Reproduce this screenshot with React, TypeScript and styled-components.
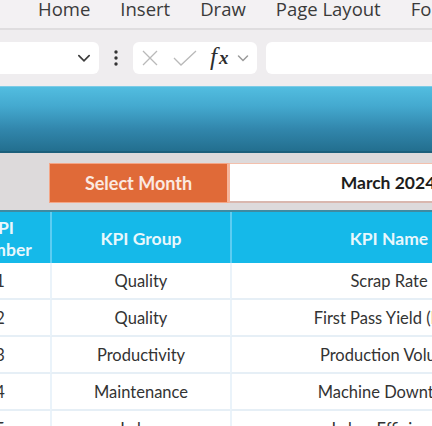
import React from "react";
import styled, { createGlobalStyle } from "styled-components";

const Global = createGlobalStyle`
  html, body { margin: 0; padding: 0; background: #ffffff; }
  body { width: 432px; height: 426px; overflow: hidden; }
  * { box-sizing: border-box; }
`;

const Page = styled.div`
  width: 432px;
  height: 426px;
  overflow: hidden;
  background: #ffffff;
`;

const TabBar = styled.div`
  height: 30px;
  background: #f3f1f3;
  display: flex;
  align-items: flex-start;
  gap: 30px;
  padding-left: 38px;
  border-bottom: 2px solid #dfdddf;
  white-space: nowrap;
  overflow: hidden;
`;

const Tab = styled.span`
  font-family: "Open Sans", "Noto Sans", sans-serif;
  font-size: 18.5px;
  line-height: 20px;
  color: #3a3a3a;
  margin-top: -1px;
`;

const FormulaRow = styled.div`
  height: 56px;
  background: #efedef;
  display: flex;
  align-items: center;
`;

const NameBox = styled.div`
  width: 107px;
  height: 32px;
  margin-left: -8px;
  background: #ffffff;
  border-radius: 6px;
  display: flex;
  align-items: center;
  justify-content: flex-end;
  padding-right: 7px;
`;

const Dots = styled.div`
  width: 34px;
  display: flex;
  justify-content: center;
`;

const IconBox = styled.div`
  width: 124px;
  height: 32px;
  background: #ffffff;
  border-radius: 6px;
  display: flex;
  align-items: center;
  padding-left: 7px;
`;

const Spacer = styled.span<{ $w: number }>`
  width: ${(p) => p.$w}px;
  flex: none;
`;

const FormulaInput = styled.div`
  flex: 1;
  height: 32px;
  margin-left: 9px;
  margin-right: -10px;
  background: #ffffff;
  border-radius: 6px;
`;

const Banner = styled.div`
  height: 67px;
  background: linear-gradient(180deg, #52bde0 0%, #44a9cf 30%, #3287ad 65%, #236f8f 100%);
  border-top: 1px solid #7ccbe6;
  border-bottom: 2px solid #1c5f7b;
`;

const Band = styled.div`
  height: 59px;
  background: #dddadb;
  display: grid;
  grid-template-columns: 99px 181px 316px;
  margin-left: -50px;
  align-items: start;
  padding-top: 10px;
  border-bottom: 2px solid #3f8aa1;
`;

const SelectLabel = styled.div`
  height: 40px;
  background: #e06a38;
  border: 1px solid #f4a687;
  border-right: 3px solid #f6b59b;
  display: flex;
  align-items: center;
  justify-content: center;
  font-family: "Lato", sans-serif;
  font-weight: 700;
  font-size: 18px;
  color: #fbe9e1;
`;

const SelectValue = styled.div`
  height: 40px;
  background: #ffffff;
  border-top: 1px solid #f3c0ad;
  border-bottom: 2px solid #d9b7ae;
  display: flex;
  align-items: center;
  justify-content: center;
  font-family: "Lato", sans-serif;
  font-weight: 700;
  font-size: 17.5px;
  color: #1d1d1d;
`;

const Table = styled.div`
  display: grid;
  grid-template-columns: 100px 180px 316px;
  margin-left: -50px;
`;

const HeadCell = styled.div<{ $first?: boolean }>`
  height: 51px;
  background: #15b9e9;
  border-left: ${(p) => (p.$first ? "none" : "2px solid #5ccdf2")};
  display: flex;
  align-items: center;
  justify-content: center;
  text-align: center;
  font-family: "Lato", sans-serif;
  font-weight: 700;
  font-size: 17.5px;
  line-height: 22px;
  color: #e9f7fc;
  padding-top: 3px;
`;

const Cell = styled.div<{ $first?: boolean }>`
  height: 37px;
  background: #ffffff;
  border-left: ${(p) => (p.$first ? "none" : "2px solid #eaf3fa")};
  border-bottom: 2px solid #e6eff6;
  display: flex;
  align-items: center;
  justify-content: center;
  font-family: "Lato", sans-serif;
  font-size: 16.5px;
  color: #333333;
  white-space: nowrap;
  overflow: hidden;
`;

const ChevronIcon = ({ size = 14, color = "#444" }: { size?: number; color?: string }) => (
  <svg width={size} height={size} viewBox="0 0 14 14">
    <path d="M2.5 5 L7 9.5 L11.5 5" fill="none" stroke={color} strokeWidth="1.5" strokeLinecap="round" />
  </svg>
);

const rows = [
  ["1", "Quality", "Scrap Rate"],
  ["2", "Quality", "First Pass Yield (FPY)"],
  ["3", "Productivity", "Production Volume"],
  ["4", "Maintenance", "Machine Downtime"],
  ["5", "Labor", "Labor Efficiency"],
];

export default function App() {
  return (
    <Page>
      <Global />
      <TabBar>
        <Tab>Home</Tab>
        <Tab>Insert</Tab>
        <Tab>Draw</Tab>
        <Tab>Page Layout</Tab>
        <Tab>Formulas</Tab>
      </TabBar>
      <FormulaRow>
        <NameBox>
          <ChevronIcon size={16} color="#3c3c3c" />
        </NameBox>
        <Dots>
          <svg width="6" height="18" viewBox="0 0 6 18">
            <circle cx="3" cy="3" r="1.7" fill="#333" />
            <circle cx="3" cy="9" r="1.7" fill="#333" />
            <circle cx="3" cy="15" r="1.7" fill="#333" />
          </svg>
        </Dots>
        <IconBox>
          <svg width="20" height="20" viewBox="0 0 20 20">
            <path d="M3 3 L17 17 M17 3 L3 17" stroke="#b9b9b9" strokeWidth="1.3" fill="none" />
          </svg>
          <Spacer $w={12} />
          <svg width="26" height="20" viewBox="0 0 26 20">
            <path d="M2 10 L9 17 L24 3" stroke="#b9b9b9" strokeWidth="1.3" fill="none" />
          </svg>
          <Spacer $w={12} />
          <svg width="24" height="28" viewBox="0 0 24 28">
            <text x="0" y="21" fontFamily="'Liberation Serif', serif" fontStyle="italic" fontSize="25" fill="#2e2e2e">f</text>
            <text x="9" y="20" fontFamily="'Liberation Serif', serif" fontStyle="italic" fontWeight="700" fontSize="19" fill="#2e2e2e">x</text>
          </svg>
          <Spacer $w={2} />
          <ChevronIcon size={14} color="#9a9a9a" />
        </IconBox>
        <FormulaInput />
      </FormulaRow>
      <Banner />
      <Band>
        <div />
        <SelectLabel>Select Month</SelectLabel>
        <SelectValue>March 2024</SelectValue>
      </Band>
      <Table>
        <HeadCell $first>
          KPI
          <br />
          Number
        </HeadCell>
        <HeadCell>KPI Group</HeadCell>
        <HeadCell>KPI Name</HeadCell>
        {rows.map((r) => (
          <React.Fragment key={r[0]}>
            <Cell $first>{r[0]}</Cell>
            <Cell>{r[1]}</Cell>
            <Cell>{r[2]}</Cell>
          </React.Fragment>
        ))}
      </Table>
    </Page>
  );
}
